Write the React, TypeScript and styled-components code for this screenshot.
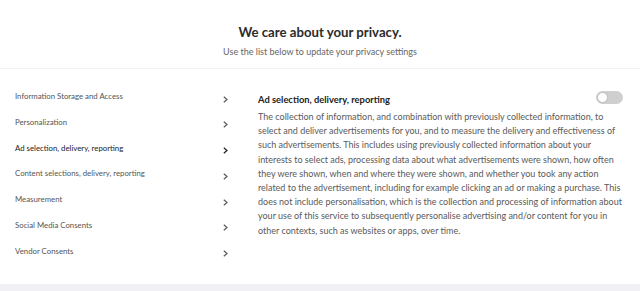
import React, { useState } from 'react';
import styled, { createGlobalStyle } from 'styled-components';

const GlobalStyle = createGlobalStyle`
  html, body {
    margin: 0;
    padding: 0;
    background: #fff;
  }
  body {
    font-family: Lato, 'Open Sans', sans-serif;
    -webkit-font-smoothing: antialiased;
  }
`;

const Page = styled.div`
  width: 640px;
  height: 291px;
  display: flex;
  flex-direction: column;
  overflow: hidden;
`;

const Header = styled.header`
  height: 69px;
  border-bottom: 1px solid #f2f2f2;
  display: flex;
  flex-direction: column;
  align-items: center;
  padding-top: 22px;
  box-sizing: border-box;
`;

const Title = styled.h1`
  margin: 0;
  font-size: 13.2px;
  line-height: 20px;
  font-weight: 700;
  color: #2b2b2b;
`;

const Subtitle = styled.p`
  margin: 4px 0 0;
  font-size: 9px;
  line-height: 12px;
  color: #666;
`;

const Main = styled.main`
  flex: 1;
  display: flex;
`;

const Menu = styled.ul`
  list-style: none;
  margin: 0;
  padding: 21px 0 0 15px;
  width: 244px;
  box-sizing: border-box;
`;

const MenuItem = styled.li<{ $active?: boolean }>`
  height: 25.75px;
  display: flex;
  align-items: flex-start;
  justify-content: space-between;
  padding-right: 16px;
  font-size: 7.8px;
  line-height: 12px;
  color: ${(p) => (p.$active ? '#222' : '#555')};
  cursor: pointer;

  svg {
    margin-top: 5.5px;
    stroke: ${(p) => (p.$active ? '#222' : '#5a5a5a')};
  }
`;

const Detail = styled.section`
  flex: 1;
  padding: 22px 17px 0 14px;
`;

const DetailHead = styled.div`
  display: flex;
  align-items: center;
  justify-content: space-between;
  height: 16px;
`;

const DetailTitle = styled.h2`
  margin: 0;
  font-size: 9.35px;
  font-weight: 700;
  color: #222;
`;

const Toggle = styled.button<{ $on: boolean }>`
  position: relative;
  width: 27px;
  height: 13px;
  border: none;
  padding: 0;
  border-radius: 7px;
  background: ${(p) => (p.$on ? '#3b82f6' : '#cfcfcf')};
  cursor: pointer;
  margin-top: -4px;

  &::after {
    content: '';
    position: absolute;
    top: 1px;
    left: ${(p) => (p.$on ? '15px' : '1px')};
    width: 9px;
    height: 9px;
    border-radius: 50%;
    background: #fff;
    border: 1px solid #bdbdbd;
  }
`;

const Description = styled.p`
  margin: 3px 0 0;
  font-size: 9px;
  line-height: 14.2px;
  color: #5a5a5a;
`;

const Footer = styled.footer`
  height: 7px;
  background: #f1f0f4;
`;

const Chevron = () => (
  <svg width="5" height="7" viewBox="0 0 5 7" fill="none" strokeWidth="1.2">
    <path d="M0.8 0.7 L4 3.5 L0.8 6.3" />
  </svg>
);

const items = [
  'Information Storage and Access',
  'Personalization',
  'Ad selection, delivery, reporting',
  'Content selections, delivery, reporting',
  'Measurement',
  'Social Media Consents',
  'Vendor Consents',
];

export default function App() {
  const [active, setActive] = useState(2);
  const [on, setOn] = useState(false);

  return (
    <>
      <GlobalStyle />
      <Page>
        <Header>
          <Title>We care about your privacy.</Title>
          <Subtitle>Use the list below to update your privacy settings</Subtitle>
        </Header>
        <Main>
          <Menu>
            {items.map((item, i) => (
              <MenuItem key={item} $active={i === active} onClick={() => setActive(i)}>
                <span>{item}</span>
                <Chevron />
              </MenuItem>
            ))}
          </Menu>
          <Detail>
            <DetailHead>
              <DetailTitle>{items[active]}</DetailTitle>
              <Toggle $on={on} onClick={() => setOn(!on)} aria-label="toggle consent" />
            </DetailHead>
            <Description>
              The collection of information, and combination with previously collected information, to
              select and deliver advertisements for you, and to measure the delivery and effectiveness of
              such advertisements. This includes using previously collected information about your
              interests to select ads, processing data about what advertisements were shown, how often
              they were shown, when and where they were shown, and whether you took any action
              related to the advertisement, including for example clicking an ad or making a purchase. This
              does not include personalisation, which is the collection and processing of information about
              your use of this service to subsequently personalise advertising and/or content for you in
              other contexts, such as websites or apps, over time.
            </Description>
          </Detail>
        </Main>
        <Footer />
      </Page>
    </>
  );
}
